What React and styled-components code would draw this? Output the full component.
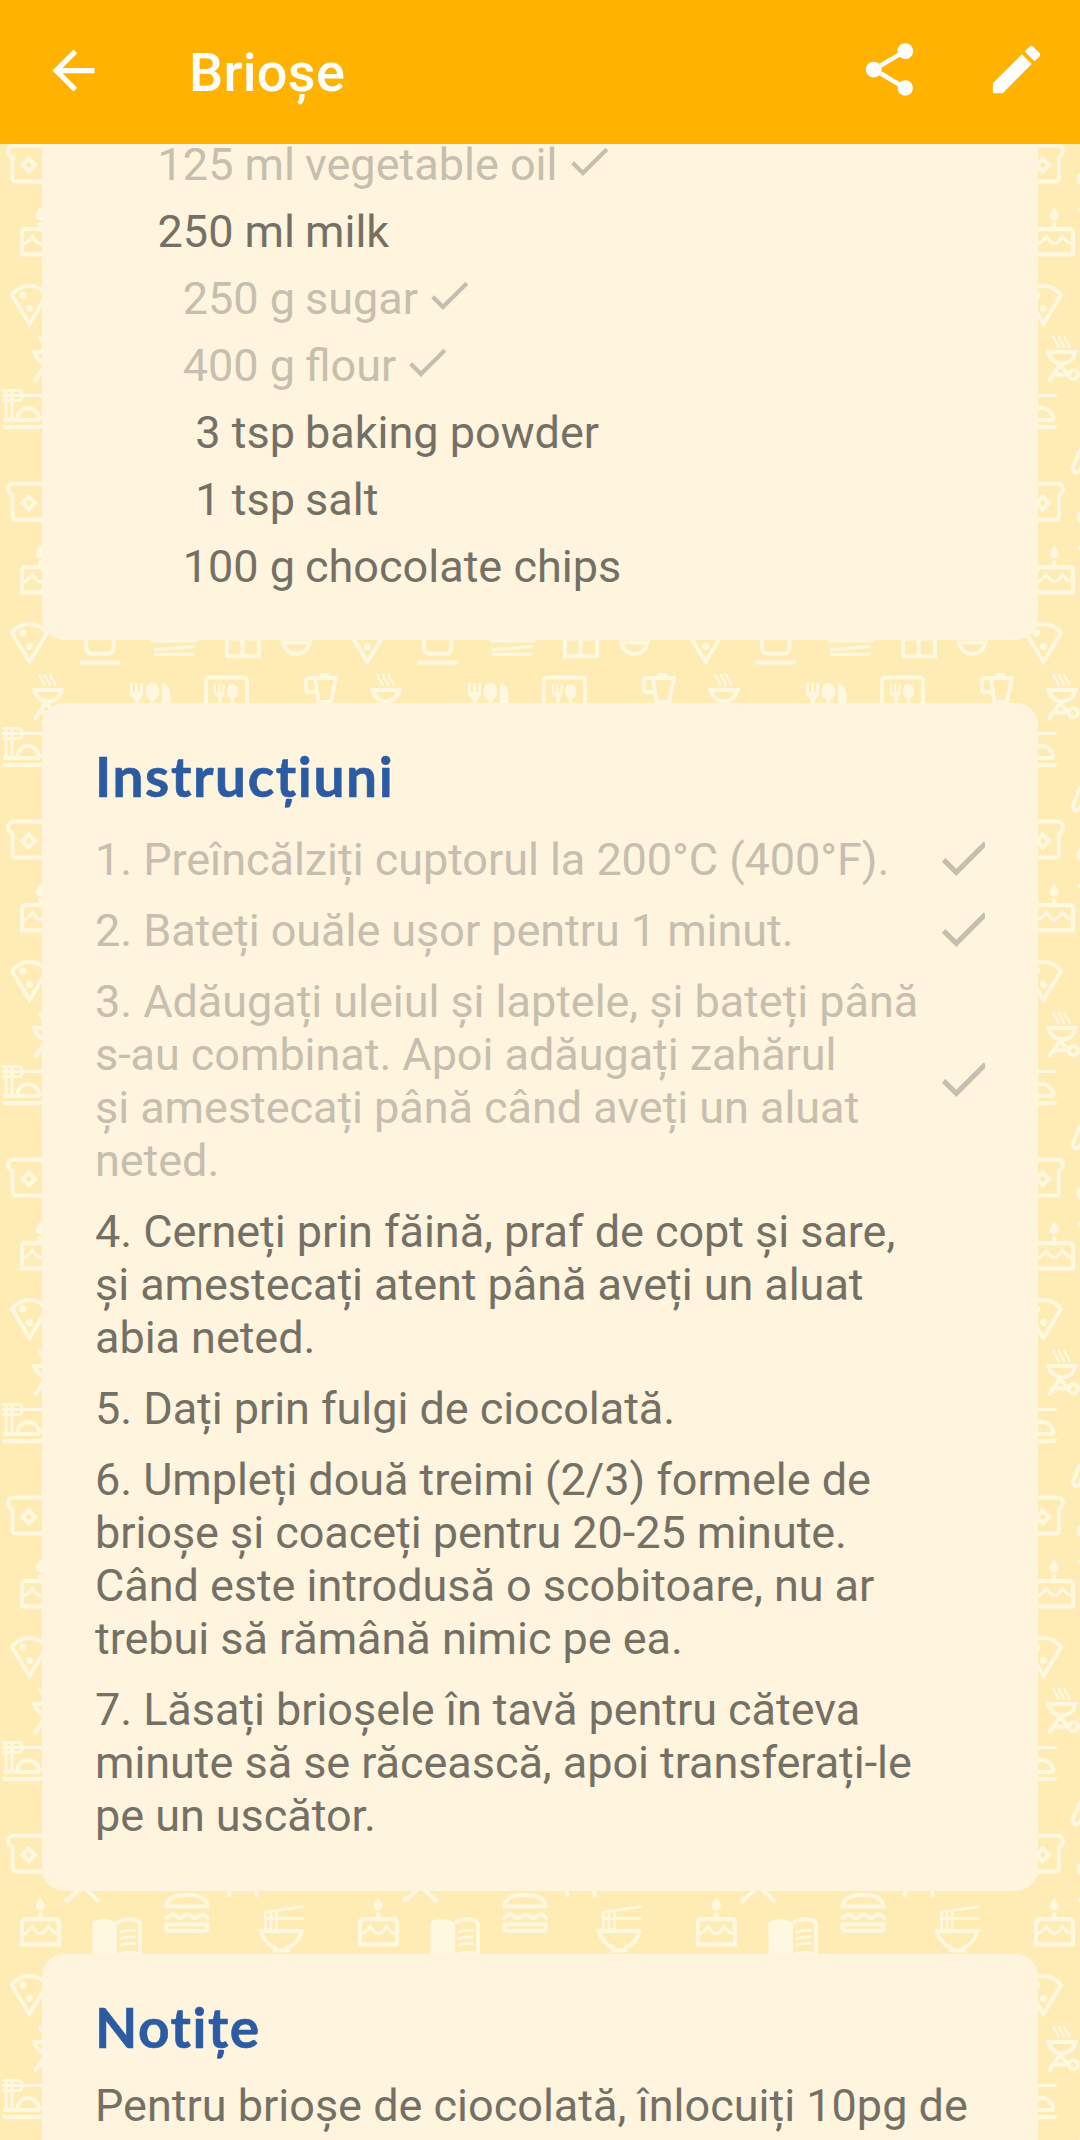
import React from "react";
import styled, { createGlobalStyle } from "styled-components";

const GlobalStyle = createGlobalStyle`
  * { box-sizing: border-box; }
  body { margin: 0; background: #ffebb4; }
`;

const Screen = styled.div`
  position: relative;
  isolation: isolate;
  display: flex;
  flex-direction: column;
  width: 1080px;
  height: 2140px;
  overflow: hidden;
  background: #ffebb4;
  font-family: Roboto, "Noto Sans", sans-serif;
  color: #757065;
`;

const Wallpaper = styled.svg`
  position: absolute;
  inset: 0;
  z-index: -1;
`;

const AppBar = styled.header`
  flex: none;
  display: flex;
  align-items: center;
  height: 144px;
  padding: 0 32px 4px 42px;
  background: #ffb300;
  color: #fff;
`;

const BarTitle = styled.h1`
  flex: 1;
  margin: 0;
  padding: 6px 0 0 84px;
  font-size: 54px;
  font-weight: 500;
  line-height: 62px;
  letter-spacing: 0.3px;
`;

const Icon = styled.svg`
  flex: none;
  display: block;
  width: ${(p) => p.$size}px;
  height: ${(p) => p.$size}px;
  fill: currentColor;
`;

const BarActions = styled.div`
  display: flex;
  gap: 64px;
  padding-bottom: 1px;
`;

const Content = styled.main`
  flex: 1;
  min-height: 0;
  display: flex;
  flex-direction: column;
  gap: 63px;
  padding: 0 42px;
  overflow: hidden;
`;

const Card = styled.section`
  flex: none;
  height: ${(p) => p.$height}px;
  padding: 0 53px;
  border-radius: ${(p) => (p.$scrolled ? "0 0 22px 22px" : "22px")};
  background: #fff4dd;
  font-size: 45px;
  line-height: 53px;
`;

const Heading = styled.h2`
  margin: 0;
  padding-top: 40px;
  height: ${(p) => p.$height}px;
  font-family: Lato, sans-serif;
  font-size: 55px;
  font-weight: 700;
  line-height: 66px;
  letter-spacing: ${(p) => p.$spacing}px;
  font-variant-ligatures: none;
  color: #2b5ba2;
  -webkit-text-stroke: 0.6px #2b5ba2;
  stroke-linejoin: round;
`;

const Ingredients = styled.ul`
  margin: -13px 0 0;
  padding: 0;
  list-style: none;
`;

const Ingredient = styled.li`
  display: grid;
  grid-template-columns: 200px auto auto;
  justify-content: start;
  align-items: center;
  height: 67px;
  column-gap: 10px;
  white-space: nowrap;
  color: ${(p) => (p.$done ? "#c6beae" : "inherit")};

  svg { margin: 0 0 6px -4px; }
`;

const Amount = styled.span`
  text-align: right;
`;

const Steps = styled.ol`
  display: flex;
  flex-direction: column;
  gap: 18px;
  margin: 0;
  padding: 0;
  list-style: none;
  letter-spacing: -0.05px;
`;

const Step = styled.li`
  display: flex;
  align-items: center;
  justify-content: space-between;
  white-space: pre;
  color: ${(p) => (p.$done ? "#c6beae" : "inherit")};
`;

const StepMark = styled.span`
  width: 52px;
  height: 53px;
  overflow: hidden;
  svg { margin-top: -6.5px; }
`;

const Note = styled.p`
  margin: 0;
  white-space: pre;
`;

const Check = ({ size }) => (
  <Icon $size={size} viewBox="0 0 24 24">
    <path d="M9 16.17 4.83 12l-1.42 1.41L9 19 21 7l-1.41-1.41z" />
  </Icon>
);

const ink = "#fff8e1";

const FoodWallpaper = () => (
  <Wallpaper width="1080" height="2140" aria-hidden="true">
    <defs>
      <pattern id="food" x="0" y="-8" width="338" height="338" patternUnits="userSpaceOnUse">
        <g fill="none" stroke={ink} strokeWidth="4" transform="translate(0 8)">
          {/* barbecue */}
          <path strokeWidth="2.4" d="M39.5-2c0 6 5 6 5 12M45-2c0 6 5 6 5 12M50.500-2c0 6 5 6 5 12" />
          <path d="M34.500 14H61.500C60 21 54.500 25.500 48 25.500S36 21 34.500 14z" />
          <path d="M46 27L35.500 42M41 36.500H55M47 28L54 36" strokeLinecap="round" />
          <circle cx="59.500" cy="36.700" r="4.500" />
          {/* cutlery */}
          <g fill={ink} stroke="none">
            <path d="M130 7h3v9h2V7h3v9h2V7h3v12l-4 5v14h-4V24l-5-5z" />
            <path d="M152.500 6.700c4 0 6.700 4 6.700 9 0 4-2 7-4.700 8V40h-4V23.700c-2.700-1-4.700-4-4.700-8 0-5 2.700-9 6.700-9z" />
            <path d="M162 7c5 1 8.500 6 8.500 12v20H162z" />
            <path d="M214 8h2v8h2.300V8h2v8h2.300V8h2v10l-3 4v12h-3V22l-4.600-4z" />
            <path d="M232.500 8c3.500 0 5.500 3.500 5.500 7.500 0 3.500-1.500 6-4 7V34h-3V22.500c-2.500-1-4-3.500-4-7 0-4 2-7.500 5.500-7.500z" />
          </g>
          {/* framed menu */}
          <rect x="206" y="1.500" width="41" height="40" rx="3" />
          {/* pitcher */}
          <path d="M315 2H336L331 26H318.500z" strokeWidth="3.800" />
          <path d="M316 2H309q-3 0-3 3v8q0 3 3 3h8" />
          <path d="M319.500-1h9.500" />
          {/* noodles on a plate */}
          <path strokeWidth="3" d="M2 52.500H20M2 57.500H42.700M2 62.500H20M20 52c3 3 3 8 0 11M6 52V84M12 52V84" />
          <path d="M3 82H40" strokeWidth="3.800" />
          <path d="M17 82c1-16 21-16 22.500 0" />
          <path d="M1 87H44.500l-4.500 4.300H4.500z" fill={ink} stroke="none" />
          {/* whisk */}
          <path d="M68 113c-4-1-4 4-5 7l-4 9c-1 5 4 7 7 3l3-5" />
          <path d="M67 172c-6 3-6 11 0 14z" fill={ink} stroke="none" />
          <path d="M63.500 209.500l4-4v8z" fill={ink} stroke="none" />
          {/* bread */}
          <path d="M13.500 145.500H43.500c6.500 0 7 9 1.500 11.500V178q0 3.500-3.500 3.500H16q-3.500 0-3.500-3.500V157C6 154.500 7 145.500 13.500 145.500z" />
          <path d="M28.700 158.500l6.300 6.500-6.300 6.500-6.300-6.500z" />
          {/* cake */}
          <path d="M40.300 207c2 4 4.500 6.500 4.500 9s-2 4.500-4.500 4.500-4.500-2-4.500-4.500 2.500-5 4.500-9z" fill={ink} stroke="none" />
          <path d="M40.300 222.500V228M22 254.300V233q0-3.800 3.800-3.800H55.200q3.800 0 3.800 3.800V254.300z" strokeWidth="4.200" />
          <path d="M22 243.500c4 1 7-3 10.300-7 3 4 4.500 7 8 7s5-3 8-7c3.500 4 6.500 8 10.700 7" strokeWidth="3.200" />
          {/* tent */}
          <path d="M66 212l16.600-16L99.200 212" />
          {/* cookbook */}
          <path d="M92.500 232c6-4 18-4 24.500 1V270H92.500z" fill={ink} stroke="none" />
          <path d="M117 233c6-5 18-5 23 0V270M117 266c6-4 16-4 23-1" />
          <path d="M120 243c3-2.500 9-3 15.500-2.500M120 249.500c3-2.500 9-3 15.500-2.500M120 256c3-2.500 9-3 15.500-2.500" strokeWidth="2.800" />
          {/* burger */}
          <path d="M166.500 216.500H207.500C207 207 198 205 187 205S167 207 166.500 216.500z" />
          <path d="M165 228c4 0 4-3.500 7.500-3.500s4 3.500 7.500 3.500 4-3.500 7.500-3.500 4 3.500 7.500 3.500 4-3.500 7.500-3.500 3 3.500 7 3.500" strokeWidth="3.800" />
          <path d="M166.500 234.500H207.500V238q0 3-3 3H169.500q-3 0-3-3z" />
          {/* stool */}
          <path d="M229.200 190v16.700M256.500 190v16.700" />
          {/* ramen */}
          <path d="M261 241H301.500C300 249 294 255 287.500 257.500V260.500H275V257.500C268.500 255 262.500 249 261 241z" />
          <path d="M263.500 222.500L303.500 216.500M264 228.500H303.500M265.500 221V240M271 221V240M276.500 220V240" strokeWidth="2.600" />
          {/* pizza */}
          <path d="M12 295c9-12 26-12 35 0L29.500 324z" />
          <g fill={ink} stroke="none">
            <circle cx="22.700" cy="295" r="3.400" />
            <circle cx="29.500" cy="308.500" r="3.400" />
          </g>
          {/* coffee cup */}
          <path d="M86 296V309q0 6.700 6.700 6.700h14q6.700 0 6.700-6.700V296M79.500 324.500H120" />
          {/* sandwich */}
          <path d="M152 300q0 2.500 2.500 2.500h40q2.500 0 2.500-2.500" />
          <path d="M154 311.800L194.500 308.500M154 316.300H194.500" strokeWidth="3.200" />
          {/* gift */}
          <path d="M227 298V318.200H259V298M242.600 298V318" />
          <path d="M222 302H264" strokeWidth="1" />
          {/* bowl */}
          <path d="M283 304.500H309.500C308 311.500 303 316 296.300 316S284.500 311.500 283 304.500z" strokeWidth="3.800" />
        </g>
      </pattern>
    </defs>
    <rect width="1080" height="2140" fill="url(#food)" />
  </Wallpaper>
);

const ingredients = [
  { amount: "125 ml", name: "vegetable oil", done: true },
  { amount: "250 ml", name: "milk" },
  { amount: "250 g", name: "sugar", done: true },
  { amount: "400 g", name: "flour", done: true },
  { amount: "3 tsp", name: "baking powder" },
  { amount: "1 tsp", name: "salt" },
  { amount: "100 g", name: "chocolate chips" },
];

const steps = [
  { text: "1. Preîncălziți cuptorul la 200°C (400°F).", done: true },
  { text: "2. Bateți ouăle ușor pentru 1 minut.", done: true },
  {
    text: "3. Adăugați uleiul și laptele, și bateți până\ns-au combinat. Apoi adăugați zahărul\nși amestecați până când aveți un aluat\nneted.",
    done: true,
  },
  { text: "4. Cerneți prin făină, praf de copt și sare,\nși amestecați atent până aveți un aluat\nabia neted." },
  { text: "5. Dați prin fulgi de ciocolată." },
  {
    text: "6. Umpleți două treimi (2/3) formele de\nbrioșe și coaceți pentru 20-25 minute.\nCând este introdusă o scobitoare, nu ar\ntrebui să rămână nimic pe ea.",
  },
  { text: "7. Lăsați brioșele în tavă pentru căteva\nminute să se răcească, apoi transferați-le\npe un uscător." },
];

export default function App() {
  return (
    <>
      <GlobalStyle />
      <Screen>
        <FoodWallpaper />
        <AppBar>
          <Icon $size={63} viewBox="0 0 24 24">
            <path d="M20 11H7.830l5.590-5.590L12 4l-8 8 8 8 1.410-1.410L7.830 13H20v-2z" />
          </Icon>
          <BarTitle>Brioșe</BarTitle>
          <BarActions>
            <Icon $size={63} viewBox="0 0 24 24">
              <path d="M18 16.080c-.76 0-1.440.3-1.960.77L8.910 12.700c.05-.23.090-.46.090-.7s-.04-.47-.09-.7l7.050-4.110c.54.5 1.250.81 2.040.81 1.660 0 3-1.340 3-3s-1.340-3-3-3-3 1.340-3 3c0 .24.040.47.090.7L8.040 9.810C7.500 9.310 6.790 9 6 9c-1.660 0-3 1.340-3 3s1.340 3 3 3c.79 0 1.500-.31 2.040-.81l7.120 4.160c-.05.21-.08.43-.08.65 0 1.610 1.310 2.920 2.920 2.920s2.920-1.310 2.920-2.920-1.310-2.920-2.920-2.920z" />
            </Icon>
            <Icon $size={63} viewBox="0 0 24 24">
              <path d="M3 17.250V21h3.750L17.810 9.940l-3.750-3.750L3 17.250zM20.710 7.040c.39-.39.39-1.020 0-1.410l-2.340-2.340c-.39-.39-1.020-.39-1.410 0l-1.830 1.830 3.750 3.750 1.830-1.830z" />
            </Icon>
          </BarActions>
        </AppBar>
        <Content>
          <Card $height={496} $scrolled>
            <Ingredients>
              {ingredients.map((item) => (
                <Ingredient key={item.name} $done={item.done}>
                  <Amount>{item.amount}</Amount>
                  <span>{item.name}</span>
                  {item.done && <Check size={50.6} />}
                </Ingredient>
              ))}
            </Ingredients>
          </Card>
          <Card $height={1188}>
            <Heading $height={130} $spacing={1.6}>Instrucțiuni</Heading>
            <Steps>
              {steps.map((step) => (
                <Step key={step.text} $done={step.done}>
                  <span>{step.text}</span>
                  {step.done && (
                    <StepMark>
                      <Check size={62} />
                    </StepMark>
                  )}
                </Step>
              ))}
            </Steps>
          </Card>
          <Card $height={400}>
            <Heading $height={125} $spacing={1.5}>Notițe</Heading>
            <Note>{"Pentru brioșe de ciocolată, înlocuiți 10pg de\nfăină"}</Note>
          </Card>
        </Content>
      </Screen>
    </>
  );
}
